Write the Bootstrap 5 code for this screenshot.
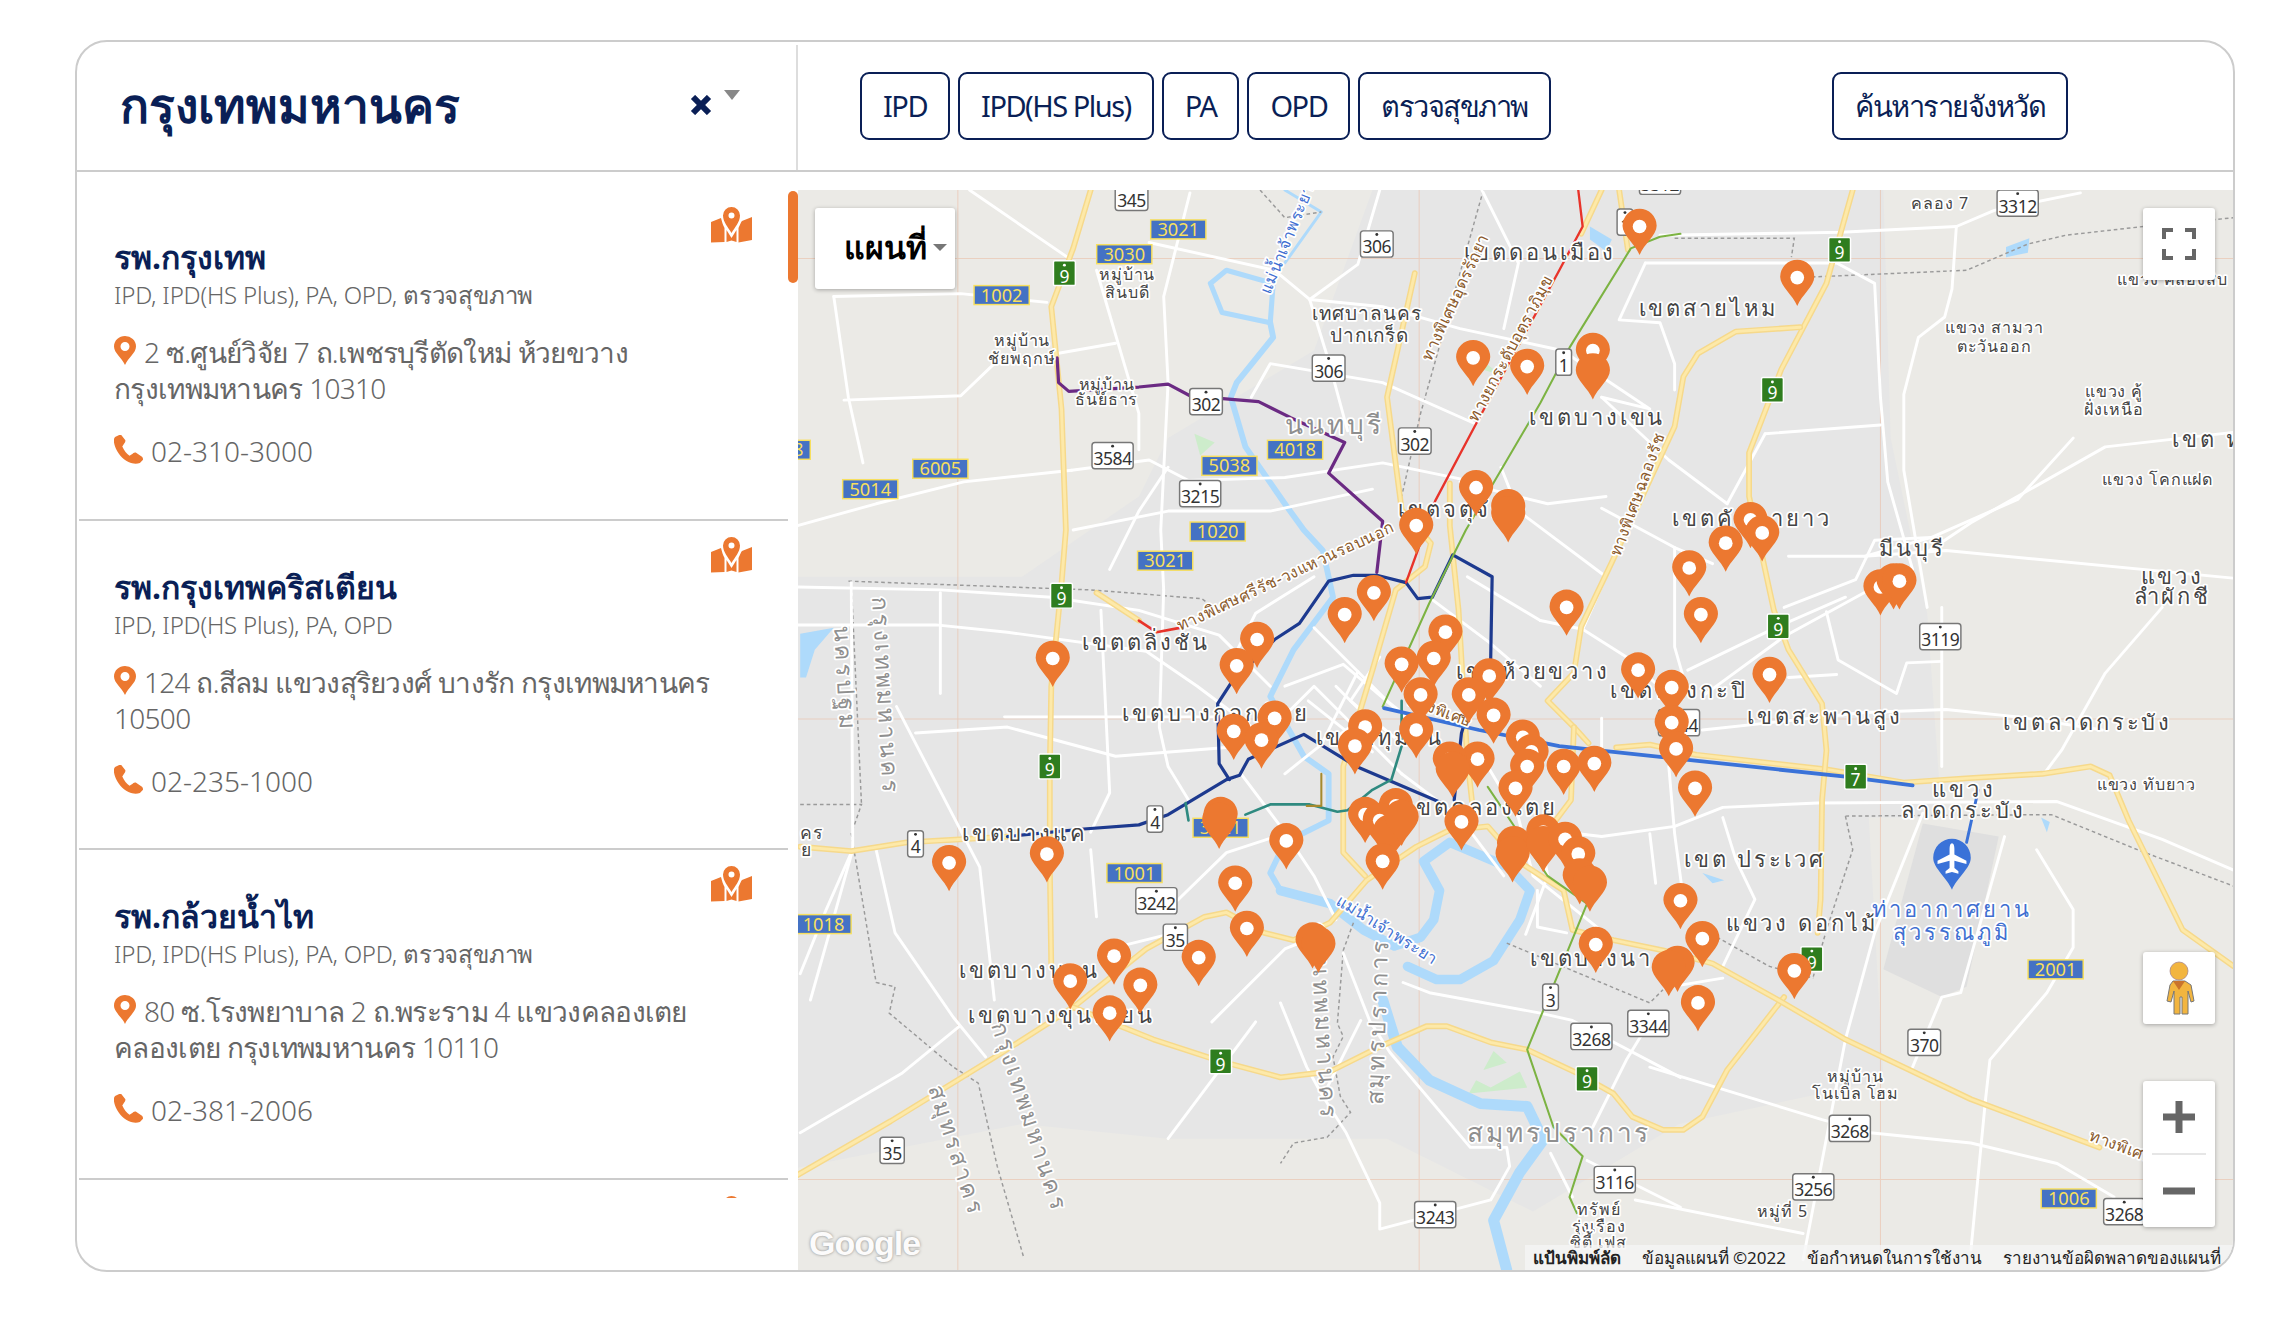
<!DOCTYPE html>
<html lang="th">
<head>
    <meta charset="UTF-8">
    <meta name="viewport" content="width=device-width, initial-scale=1.0">
    <title>โรงพยาบาล</title>
    <link href="https://cdn.jsdelivr.net/npm/bootstrap@5.3.0/dist/css/bootstrap.min.css" rel="stylesheet">
    <style>
        body { background: #fff; font-family: "Noto Sans", sans-serif; color: #666; }
        .hosp-card { width: 2160px; height: 1232px; margin: 40px 0 0 75px; border: 2px solid #ccc; border-radius: 32px; overflow: hidden; }
        .hosp-head { height: 130px; border-bottom: 2px solid #ccc; flex: none; }
        .prov-box { width: 721px; padding: 0 56px 6px 43px; border-right: 2px solid #ddd; margin-top: 3px; }
        .prov-title { font-size: 48px; font-weight: 700; color: #0a1f56; margin: 0; line-height: 1.2; }
        .prov-caret { width: 0; height: 0; border-left: 8px solid transparent; border-right: 8px solid transparent; border-top: 10px solid #888; margin: 0 0 20px 12px; }
        .filter-box { padding: 0 165px 0 62px; gap: 8px; }
        .btn-plan { height: 68px; padding: 0 21px 2px; font-size: 29px; letter-spacing: -1.5px; line-height: 1; color: #0a1f56; background: #fff; border: 2px solid #0a1f56; border-radius: 9px; white-space: nowrap; }
        .btn-plan:hover { color: #0a1f56; background: #fff; border-color: #0a1f56; }
        .hosp-list { width: 721px; height: 1007px; margin-top: 19px; flex: none; overflow: hidden; position: relative; }
        .hosp-item { height: 329.5px; margin: 0 10px 0 2px; padding: 0 36px 0 35px; border-bottom: 2px solid #ccc; }
        .hosp-text { width: 596px; flex: none; }
        .hosp-name { font-size: 32px; font-weight: 700; color: #0a1f56; line-height: 44px; margin: 44px 0 0; white-space: nowrap; }
        .hosp-plans { font-size: 24px; font-weight: 300; letter-spacing: -.2px; line-height: 32px; margin: 0; white-space: nowrap; }
        .hosp-addr { font-size: 28px; font-weight: 300; letter-spacing: -.7px; line-height: 36px; margin: 23px 0 0; }
        .hosp-tel { font-size: 28px; font-weight: 300; line-height: 36px; margin: 27px 0 0; }
        .ico-pin { width: 22px; height: 29px; vertical-align: -2px; margin-right: 8px; }
        .ico-tel { width: 29px; height: 29px; vertical-align: -2px; margin-right: 8px; }
        .ico-map { width: 41px; height: 36px; margin-top: 16px; flex: none; }
        .list-thumb { position: absolute; right: 0; top: 0; width: 10px; height: 92px; background: #ec7830; border-radius: 5px; }
        .map-pane { height: 1080px; margin-top: 18px; overflow: hidden; position: relative; background: #ebeae6; flex-grow: 1; }
        .map-pane svg.map-canvas { display: block; width: 100%; height: 100%; }
        .map-canvas text { font-family: "Noto Sans", sans-serif; text-anchor: middle; paint-order: stroke; stroke: #fff; stroke-width: 2.4px; stroke-linejoin: round; }
        .map-canvas text.shield-num { stroke: none; }
        .map-ctrl { position: absolute; background: #fff; border-radius: 3px; box-shadow: 0 1px 4px rgba(0,0,0,.3); }
        .ctrl-type { left: 17px; top: 18px; width: 140px; height: 81px; padding: 0 0 3px 20px; font-size: 32px; font-weight: 700; color: #000; gap: 6px; }
        .ctrl-caret { width: 0; height: 0; border-left: 7px solid transparent; border-right: 7px solid transparent; border-top: 7px solid #777; }
        .ctrl-full { right: 18px; top: 18px; width: 72px; height: 72px; }
        .ctrl-peg { right: 18px; top: 762px; width: 72px; height: 72px; }
        .ctrl-zoom { right: 18px; top: 891px; width: 72px; height: 146px; }
        .zoom-cell { flex: 1 1 0; }
        .zoom-line { width: 54px; height: 2px; background: #e6e6e6; margin: 0 auto; }
        .map-foot { position: absolute; right: 0; bottom: 0; height: 25px; padding: 0 12px 0 8px; gap: 21px; background: rgba(245,245,245,.75); font-size: 17px; line-height: 25px; color: #222; white-space: nowrap; }
        .map-logo { position: absolute; left: 11px; bottom: 10px; font-family: "Liberation Sans", sans-serif; font-size: 34px; font-weight: 700; color: #fff; opacity: .85; letter-spacing: -1px; text-shadow: 0 0 3px #777; line-height: 1; }
    </style>
</head>
<body>
    <div class="hosp-card d-flex flex-column">
        <div class="hosp-head d-flex">
            <div class="prov-box d-flex align-items-center">
                <h1 class="prov-title flex-grow-1">กรุงเทพมหานคร</h1>
                <svg width="22" height="20" viewBox="0 0 22 20"><path d="M3 2 19 18M19 2 3 18" stroke="#0a1f56" stroke-width="6" fill="none"/></svg>
                <span class="prov-caret"></span>
            </div>
            <div class="filter-box d-flex align-items-center flex-grow-1">
                <button class="btn btn-plan">IPD</button>
                <button class="btn btn-plan">IPD(HS Plus)</button>
                <button class="btn btn-plan">PA</button>
                <button class="btn btn-plan">OPD</button>
                <button class="btn btn-plan">ตรวจสุขภาพ</button>
                <button class="btn btn-plan ms-auto">ค้นหารายจังหวัด</button>
            </div>
        </div>
        <div class="d-flex flex-grow-1">
            <div class="hosp-list">
                <div class="hosp-item d-flex justify-content-between">
                    <div class="hosp-text">
                        <h2 class="hosp-name">รพ.กรุงเทพ</h2>
                        <p class="hosp-plans">IPD, IPD(HS Plus), PA, OPD, ตรวจสุขภาพ</p>
                        <p class="hosp-addr"><svg class="ico-pin"><use href="#sym-pin"/></svg>2 ซ.ศูนย์วิจัย 7 ถ.เพชรบุรีตัดใหม่ ห้วยขวาง กรุงเทพมหานคร 10310</p>
                        <p class="hosp-tel"><svg class="ico-tel"><use href="#sym-tel"/></svg>02-310-3000</p>
                    </div>
                    <svg class="ico-map"><use href="#sym-map"/></svg>
                </div>
                <div class="hosp-item d-flex justify-content-between">
                    <div class="hosp-text">
                        <h2 class="hosp-name">รพ.กรุงเทพคริสเตียน</h2>
                        <p class="hosp-plans">IPD, IPD(HS Plus), PA, OPD</p>
                        <p class="hosp-addr"><svg class="ico-pin"><use href="#sym-pin"/></svg>124 ถ.สีลม แขวงสุริยวงศ์ บางรัก กรุงเทพมหานคร 10500</p>
                        <p class="hosp-tel"><svg class="ico-tel"><use href="#sym-tel"/></svg>02-235-1000</p>
                    </div>
                    <svg class="ico-map"><use href="#sym-map"/></svg>
                </div>
                <div class="hosp-item d-flex justify-content-between">
                    <div class="hosp-text">
                        <h2 class="hosp-name">รพ.กล้วยน้ำไท</h2>
                        <p class="hosp-plans">IPD, IPD(HS Plus), PA, OPD, ตรวจสุขภาพ</p>
                        <p class="hosp-addr"><svg class="ico-pin"><use href="#sym-pin"/></svg>80 ซ.โรงพยาบาล 2 ถ.พระราม 4 แขวงคลองเตย คลองเตย กรุงเทพมหานคร 10110</p>
                        <p class="hosp-tel"><svg class="ico-tel"><use href="#sym-tel"/></svg>02-381-2006</p>
                    </div>
                    <svg class="ico-map"><use href="#sym-map"/></svg>
                </div>
                <div class="hosp-item d-flex justify-content-end">
                    <svg class="ico-map"><use href="#sym-map"/></svg>
                </div>
                <span class="list-thumb"></span>
            </div>
            <div class="map-pane">
                <svg class="map-canvas" viewBox="546.5 130 983 740" preserveAspectRatio="none">
                    <polygon fill="#e6e6e6" points="546,395 700,395 780,340 800,300 900,240 940,130 1290,130 1295,300 1320,420 1330,560 1280,560 1290,740 1150,770 1050,830 950,780 800,780 700,770 546,800"/>
                    <polygon fill="#dfdfdf" points="1317,564 1369,573 1347,676 1330,683 1290,664"/>
                    <g fill="#cdeccb">
                        <polygon points="1023,720 1032,728 1016,733"/>
                        <polygon points="1006,749 1011,740 1021,745 1041,734 1046,745"/>
                        <polygon points="818,297 832,303 822,312"/>
                        <polygon points="1013,245 1028,257 1012,252"/>
                    </g>
                    <g fill="#aedafb">
                        <polygon points="1374,169 1390,163 1389,173 1374,176"/>
                        <polygon points="1089,155 1104,164 1100,172 1089,164"/>
                        <polygon points="1166,598 1181,603 1173,605"/>
                        <polygon points="548,434 571,430 558,445 552,464 548,464"/>
                        <polygon points="1398,560 1404,563 1402,570"/>
                    </g>
                    <g fill="none" stroke="#e9b9a0" stroke-opacity=".55" stroke-width=".7">
                        <path d="M656 130V870M972 130V870M1288 130V870M546 177H1530M546 492.500H1530M546 808H1530"/>
                    </g>
                    <g id="riverLayer" fill="none" stroke="#aedafb" stroke-linejoin="round" stroke-linecap="round"></g>
                    <g id="dashLayer" fill="none" stroke="#9a9a9a" stroke-width="1" stroke-dasharray="2.500 2"></g>
                    <g id="roadLayer" fill="none" stroke="#fff" stroke-linejoin="round" stroke-linecap="round"></g>
                    <g id="highwayLayer" fill="none" stroke-linejoin="round" stroke-linecap="round"></g>
                    <g id="transitLayer" fill="none" stroke-linejoin="round" stroke-linecap="round"></g>
                    <g id="labelLayer"></g>
                    <g id="shieldLayer"></g>
                    <g id="markerLayer"></g>
                </svg>
                <div class="map-ctrl ctrl-type d-flex align-items-center justify-content-center">แผนที่<span class="ctrl-caret"></span></div>
                <div class="map-ctrl ctrl-full d-flex align-items-center justify-content-center">
                    <svg width="34" height="32" viewBox="0 0 34 32"><path d="M2 11V2H11M23 2H32V11M2 21V30H11M23 30H32V21" fill="none" stroke="#666" stroke-width="4"/></svg>
                </div>
                <div class="map-ctrl ctrl-peg d-flex align-items-center justify-content-center">
                    <svg width="32" height="54" viewBox="0 0 32 54"><path d="M10 20h12l6 4 3 16-3 1-3-11v23h-6V36h-2v17H11V30L8 41l-4-1 3-16z" fill="#f2b53f" stroke="#777" stroke-width="1"/><circle cx="16" cy="10" r="9" fill="#f2b53f" stroke="#a88" stroke-width=".8"/><path d="M10 20h12l-6 9z" fill="#c9742c"/></svg>
                </div>
                <div class="map-ctrl ctrl-zoom d-flex flex-column">
                    <div class="zoom-cell d-flex align-items-center justify-content-center"><svg width="34" height="34" viewBox="0 0 34 34"><path d="M17 1V33M1 17H33" stroke="#666" stroke-width="7"/></svg></div>
                    <div class="zoom-line"></div>
                    <div class="zoom-cell d-flex align-items-center justify-content-center"><svg width="34" height="8" viewBox="0 0 34 8"><path d="M1 4H33" stroke="#666" stroke-width="7"/></svg></div>
                </div>
                <div class="map-logo">Google</div>
                <div class="map-foot d-flex">
                    <span class="fw-bold">แป้นพิมพ์ลัด</span>
                    <span>ข้อมูลแผนที่ ©2022</span>
                    <span>ข้อกำหนดในการใช้งาน</span>
                    <span>รายงานข้อผิดพลาดของแผนที่</span>
                </div>
            </div>
        </div>
    </div>

    <svg width="0" height="0" class="position-absolute">
        <symbol id="sym-pin" viewBox="0 0 22 29"><path fill-rule="evenodd" fill="#ec7830" d="M11 29C8 22 0 17 0 10.500A11 10.500 0 0 1 22 10.500C22 17 14 22 11 29ZM11 6A4.500 4.500 0 1 0 11 15 4.500 4.500 0 0 0 11 6Z"/></symbol>
        <symbol id="sym-tel" viewBox="0 0 28 28"><path fill="#ec7830" d="M5 0 1 2C-1 4 0 8 1 11 3 17 8 23 14 26 18 28 22 28 25 27L28 24C28 23 28 22 27 21L21 17C20 17 19 17 18 18L15 20C12 18 10 15 8 11L10 8C11 7 11 6 11 5L7 0Z"/></symbol>
        <symbol id="sym-map" viewBox="0 0 41 36"><path fill="#ec7830" fill-rule="evenodd" d="M20.500 26C17 20 12 15 12 8.500A8.500 8.500 0 0 1 29 8.500C29 15 24 20 20.500 26ZM20.500 5.500A3 3 0 1 0 20.500 11.500 3 3 0 0 0 20.500 5.500Z"/><path fill="#ec7830" d="M0 15 10 11C11 15 12 18 13.500 21V35L0 35.500ZM15.500 23 20.500 31 25.500 23V35L20.500 33.500 15.500 35ZM27.500 21C29 18 30 15 31 14L41 10V33L27.500 35.500Z"/></symbol>
    </svg>

    <script src="https://cdn.jsdelivr.net/npm/bootstrap@5.3.0/dist/js/bootstrap.bundle.min.js"></script>
    <script>
        // all map data is in the coordinates of the svg viewBox
        const line = pts => 'M' + pts.map(p => p.join(' ')).join('L');

        const rivers = [
            [3.500, [[829,194],[837,214],[870,221],[872,194],[840,185],[829,194]]],
            [4, [[870,221],[872,231],[847,262],[843,272],[853,306],[880,345],[893,363],[906,377],[913,409],[886,445],[870,477],[893,518],[910,530],[910,562],[880,577],[870,598],[877,610]]],
            [6.500, [[877,610],[911,619],[934,637],[955,648],[973,642],[982,630],[986,610],[975,590],[993,577],[1033,594],[1048,610],[1041,630],[1023,658],[1000,671],[984,671],[964,662]]],
            [7.500, [[947,685],[957,717],[979,740],[1014,756],[1046,758],[1057,781],[1041,803],[1023,836],[1032,870]]],
            [2, [[880,130],[905,145],[880,180]]]
        ];

        const dashes = [
            [[927,632],[920,651],[916,701],[920,710],[913,724],[918,751],[925,762],[909,779],[886,783],[877,797]],
            [[1032,646],[1130,687],[1139,678]],
            [[1147,163],[1229,163],[1227,176]],
            [[1232,190],[1347,185],[1389,167],[1415,161],[1468,155],[1530,149]],
            [[581,398],[747,404],[823,410],[837,420]],
            [[548,551],[590,551],[583,571],[600,673],[613,676],[609,694],[653,731],[670,742],[683,799],[701,861]],
            [[1264,559],[1269,582],[1251,637],[1242,669]],
            [[1264,559],[1405,558],[1464,582],[1530,607]],
            [[1176,642],[1212,662],[1242,670]],
            [[863,130],[880,149],[905,145]],
            [[1016,130],[973,283],[960,340]],
            [[583,399],[590,551]]
        ];

        const roads = [
            [[546,402],[644,404],[720,409],[780,418],[835,435],[870,470]],
            [[546,428],[641,428],[690,433],[785,446],[820,470],[860,500]],
            [[583,399],[584,582],[568,639],[555,685]],
            [[614,484],[671,594],[681,685]],
            [[644,406],[644,475]],
            [[627,502],[690,498],[764,518],[840,512]],
            [[754,418],[760,543],[747,570]],
            [[688,491],[780,491],[834,491]],
            [[797,404],[794,498],[800,525],[814,548]],
            [[747,582],[751,628]],
            [[800,623],[840,584],[880,571]],
            [[548,667],[565,625],[583,584]],
            [[600,582],[613,639],[653,697],[675,724]],
            [[548,776],[618,735],[657,703]],
            [[664,130],[731,176]],
            [[787,166],[873,185],[897,205],[947,210],[1000,225],[1070,240]],
            [[571,203],[658,201],[717,207]],
            [[571,203],[581,272],[591,317]],
            [[578,274],[658,271],[681,249],[724,242],[764,235]],
            [[751,185],[780,283],[780,308]],
            [[815,132],[797,203],[800,262],[795,363],[797,404]],
            [[897,205],[910,247],[923,295]],
            [[897,205],[930,181],[945,130]],
            [[857,272],[870,249],[947,262],[1010,290]],
            [[734,322],[787,315],[814,329],[880,327],[947,317],[1010,330]],
            [[546,360],[600,345],[660,330],[734,322]],
            [[735,363],[800,350],[870,350],[940,335]],
            [[1137,161],[1261,159],[1340,155],[1366,144],[1425,132]],
            [[1127,180],[1258,180],[1284,194],[1288,272],[1293,330],[1310,390]],
            [[1340,155],[1337,198],[1332,217],[1314,231],[1304,270],[1304,322],[1320,416]],
            [[1530,296],[1442,306],[1350,358],[1320,378]],
            [[1225,381],[1277,381],[1333,377],[1530,396]],
            [[1277,381],[1323,368],[1382,342],[1420,300]],
            [[1330,416],[1330,525]],
            [[1166,500],[1277,488],[1333,486],[1382,491],[1440,500]],
            [[1481,416],[1442,461],[1412,514],[1400,530]],
            [[1055,568],[1097,573],[1147,566],[1180,553],[1245,550],[1409,549],[1481,575],[1530,596]],
            [[1317,557],[1284,639],[1264,712],[1235,863]],
            [[1395,582],[1420,623],[1420,649],[1402,680],[1363,726],[1360,753],[1350,856]],
            [[1373,573],[1343,680],[1330,683],[1310,731]],
            [[1130,731],[1248,767],[1281,776],[1350,783],[1409,797],[1448,820]],
            [[1120,822],[1235,845]],
            [[1127,180],[1109,219],[1137,221],[1147,249],[1147,267]],
            [[1097,272],[1143,315],[1183,345]],
            [[1209,297],[1288,291]],
            [[1183,345],[1209,297]],
            [[1097,348],[1147,375],[1173,386]],
            [[1147,375],[1147,443],[1153,464]],
            [[1222,416],[1271,397],[1284,370],[1323,368]],
            [[1156,459],[1218,429],[1264,409]],
            [[1166,477],[1222,436],[1284,402]],
            [[1251,419],[1259,452],[1299,475],[1306,454],[1330,453]],
            [[1225,464],[1258,462]],
            [[1097,492],[1097,525]],
            [[1055,425],[1084,431],[1114,450],[1134,468]],
            [[1130,571],[1134,605]],
            [[1143,525],[1147,571],[1153,616]],
            [[1180,560],[1189,589],[1202,616],[1180,662]],
            [[1150,675],[1180,670]],
            [[1015,130],[1040,180],[1030,225]],
            [[1070,240],[1130,280],[1097,272]],
            [[1028,320],[1040,350],[1100,395],[1084,431]],
            [[1000,330],[1060,345],[1100,340]],
            [[1005,395],[1055,425]],
            [[980,410],[1020,440],[1055,470]],
            [[900,430],[950,480],[1000,520]],
            [[880,470],[920,455],[985,510]],
            [[870,500],[900,470],[960,530]],
            [[896,480],[940,515]],
            [[930,460],[905,510],[880,530]],
            [[915,470],[935,490],[915,505]],
            [[945,450],[925,480],[955,505]],
            [[850,530],[880,570],[900,600],[915,630]],
            [[840,460],[860,420],[900,395]],
            [[760,390],[780,350],[800,320]],
            [[1010,510],[1040,560],[1050,600],[1100,640]],
            [[960,530],[1000,560],[1030,600]],
            [[1053,610],[1053,635],[1073,639]],
            [[920,653],[938,699],[952,721],[1007,786],[1032,786],[1034,799],[1021,822],[945,842],[945,824],[922,776],[906,751],[932,699]],
            [[961,673],[979,680],[1055,694],[1077,699],[1151,738]],
            [[1062,790],[1077,820]],
            [[1091,772],[1114,726],[1128,703]],
            [[1087,795],[1151,827]],
            [[877,687],[895,731],[906,751]],
            [[1055,570],[1060,600],[1045,640]],
            [[830,700],[880,650],[905,640]],
            [[760,650],[800,640]],
            [[800,780],[860,700]]
        ];

        const highways = [
            [[747,130],[735,170],[720,210],[727,280],[730,363],[727,400],[720,470],[719,525],[719,594],[720,662],[735,690]],
            [[546,805],[610,768],[680,725],[735,690],[785,650],[825,628],[840,625],[866,639],[886,644],[911,632],[936,603],[970,580],[992,569],[1019,566],[1040,590]],
            [[548,580],[583,583],[621,577],[657,575],[690,573]],
            [[1107,512],[1130,510],[1162,517],[1251,527],[1304,536],[1349,533],[1399,530],[1432,525],[1445,531],[1458,562],[1495,637],[1530,662]],
            [[1269,130],[1251,194],[1220,253],[1198,310],[1198,340],[1207,381],[1215,418],[1225,445],[1248,482],[1251,514],[1248,548],[1247,616],[1245,639]],
            [[1233,224],[1189,227],[1163,242],[1153,258],[1147,292],[1104,385],[1083,429],[1078,461],[1060,480],[1078,498],[1088,509]],
            [[1078,498],[1076,548],[1064,564],[1040,590]],
            [[735,690],[790,712],[836,727],[877,738],[911,734],[945,717],[977,703],[991,703],[1021,714],[1046,719],[1080,735],[1105,749],[1118,765],[1139,774],[1153,774],[1166,765],[1183,733],[1222,683]],
            [[1040,590],[1071,610],[1077,637],[1105,644],[1139,651],[1173,660],[1218,685],[1264,712],[1350,753],[1438,786]],
            [[969,187],[950,272],[960,349],[980,372],[976,388],[956,404],[940,459],[920,525],[920,584],[935,600]],
            [[993,331],[993,360],[999,418],[1005,520],[1010,565]],
            [[1097,130],[1083,160]],
            [[1109,130],[1115,171]],
            [[751,406],[780,425]]
        ];

        const transit = [
            ['#1d3a8f', 2.200, [[690,573],[740,568],[780,565],[800,558],[840,534],[849,531],[855,520],[893,503],[929,525],[990,551]]],
            ['#1d3a8f', 2.200, [[842,534],[835,523],[834,482],[843,468],[873,438],[890,427],[910,398],[927,394],[943,394],[963,399],[971,410],[981,409],[995,380],[1022,395],[1021,452],[1010,473],[1001,502],[996,548]]],
            ['#6b2a83', 2.200, [[724,245],[725,262],[732,268],[780,265],[800,263],[815,271],[862,275],[884,286],[921,303],[910,324],[947,357],[943,392]]],
            ['#e8332a', 1.600, [[1081,130],[1084,155],[1068,185],[1010,292],[983,343],[971,377],[963,399]]],
            ['#e8332a', 1.800, [[780,425],[792,433],[808,430]]],
            ['#7cb342', 1.400, [[1151,160],[1137,162],[1117,170],[1075,238],[1055,276],[1004,363],[979,413],[947,484]]],
            ['#7cb342', 1.400, [[1019,539],[1060,600],[1087,619],[1046,719],[1064,772],[1084,792],[1075,820],[1080,831]]],
            ['#2f8a80', 1.800, [[960,480],[960,511],[953,534],[940,541],[923,555],[916,556],[897,551],[870,551],[853,558]]],
            ['#2f8a80', 1.800, [[814,562],[812,550]]],
            ['#3a72d8', 2.600, [[948,485],[1013,500],[1068,511],[1264,532],[1310,538]]],
            ['#3a72d8', 2, [[1355,541],[1347,577]]],
            ['#a58a2e', 1.400, [[905,530],[905,552],[895,552]]]
        ];

        // text, x, y, size, rotation, colour
        const G = '#444', B = '#8a5a2b', W = '#3f6fd1', F = '#8f8f8f';
        const labels = [
            ['เขตดอนเมือง',1055,178,15],['เขตสายไหม',1170,216,15],['เทศบาลนคร',936,219,13],['ปากเกร็ด',938,234,13],
            ['หมู่บ้าน',772,192,11],['สินบดี',772,204,11],['หมู่บ้าน',700,237,11],['ชัยพฤกษ์',700,249,11],
            ['หมู่บ้าน',758,267,11],['ธันย์ธาร',758,277,11],['นนทบุรี',914,297,18,0,F],['เขตบางเขน',1094,291,15],
            ['เขตจตุจักร',1000,354,15],['เขตคันนายาว',1200,360,15],['มีนบุรี',1310,381,15],['แขวง',1488,400,15],['ลำผักชี',1488,414,15],
            ['เขต ห',1512,306,15],['แขวง สามวา',1366,228,11],['ตะวันออก',1366,241,11],['แขวง คู้',1448,272,11],['ฝั่งเหนือ',1448,284,11],
            ['แขวง โคกแฝด',1478,332,11],['แขวง คลองสิบ',1488,195,11],['คลอง 7',1329,143,11],['เขตตลิ่งชัน',785,445,15],
            ['เขตบางกอกน้อย',833,494,15],['เขตปทุมวัน',945,510,15],['เขตห้วยขวาง',1050,465,15],['เขตบางกะปิ',1150,478,15],
            ['เขตสะพานสูง',1250,496,15],['เขตลาดกระบัง',1430,500,15],['แขวง',1345,546,15],['ลาดกระบัง',1345,560,15],
            ['แขวง ทับยาว',1470,541,11],['เขต ประเวศ',1202,594,15],['แขวง ดอกไม้',1234,638,15],['เขตบางนา',1090,662,15],
            ['เขตคลองเตย',1015,558,15],['เขตบางแค',702,576,15],['เขตบางบอน',705,670,15],['เขตบางขุนเทียน',727,701,15],
            ['หมู่บ้าน',1271,741,11],['โนเบิล โฮม',1271,753,11],['หมู่ที่ 5',1221,834,11],['สมุทรปราการ',1068,782,18,0,F],
            ['ทรัพย์',1095,832,11],['รุ่งเรือง',1095,844,11],['ซิตี้ เฟส',1095,855,11],['ท่าอากาศยาน',1337,628,15,0,W],['สุวรรณภูมิ',1337,644,15,0,W],
            ['กรุงเทพมหานคร',601,477,16,87,F],['นครปฐม',573,465,16,87,F],['กรุงเทพมหานคร',901,700,16,87,F],['สมุทรปราการ',949,700,16,-88,F],
            ['กรุงเทพมหานคร',700,767,16,72,F],['สมุทรสาคร',650,790,16,72,F],
            ['ทางพิเศษอุดรรัถยา',1000,205,11,-65,B],['ทางยกระดับอุตราภิมุข',1038,240,11,-62,B],['ทางพิเศษฉลองรัช',1125,340,11,-70,B],
            ['ทางพิเศษศรีรัช-วงแหวนรอบนอก',882,398,11,-25,B],['แม่น้ำเจ้าพระยา',885,165,11,-68,W],['แม่น้ำเจ้าพระยา',948,640,11,32,W],
            ['ทางพิเศษ',985,490,11,20,B],['ทางพิเศษ',1452,789,11,20,B],['คร',556,575,12],['ย',552,586,12]
        ];

        // white shields, blue shields, green shields
        const whiteShields = [['345',775,135],['306',943,167],['306',910,252],['302',826,275],['302',969,302],['3584',762,312],['3215',822,338],['1',1071,248],['3312',1382,139],['3312',1137,124],['3119',1329,436],['3344',1150,495],['4',627,578],['4',791,561],['3242',792,617],['35',805,642],['3',1062,683],['3268',1090,710],['3344',1129,701],['370',1318,714],['3268',1267,773],['3116',1106,808],['3256',1242,813],['3243',983,832],['35',611,788],['3268',1455,830],['1',1113,152]];
        const blueShields = [['3021',807,157],['3030',770,174],['1002',686,202],['5014',596,335],['6005',644,321],['4018',887,308],['5038',842,319],['1020',834,364],['3021',798,384],['1001',777,598],['3021',836,567],['1018',564,633],['2001',1408,664],['1006',1417,821],['5038',536,308]];
        const greenShields = [['9',729,187],['9',1260,171],['9',1214,267],['9',727,408],['9',719,525],['9',1218,429],['7',1271,532],['9',1241,657],['9',836,727],['9',1087,739]];

        // head centre of every marker; third value 0 means no hole shows
        const pins = [[1123,155],[1231,190],[1009,245],[1046,251],[1091,240],[1091,254,0],[1011,334],[1033,347],[1033,352,0],[970,360],[1073,416],[1157,389],[1182,372],[1199,356],[1207,365],[1165,421],[1288,402],[1297,398],[1301,398],[1212,462],[1122,459],[1145,471],[1145,495],[1148,513],[1161,540],[941,406],[921,421],[861,438],[847,456],[721,451],[960,455],[990,433],[982,451],[1020,463],[1006,476],[973,476],[1023,490],[970,500],[935,498],[928,511],[873,492],[845,501],[864,507],[1012,520],[993,520],[995,527,0],[1043,505],[1049,515],[1046,525],[1038,540],[1071,525],[1092,523],[836,558],[835,562,0],[881,576],[1001,563],[935,558],[956,552],[945,562],[952,570,0],[960,560,0],[947,590],[1037,578],[1036,585,0],[1057,570],[1057,578,0],[1072,575],[1081,585],[1082,600,0],[1089,605,0],[650,591],[717,585],[846,605],[854,636],[899,644,0],[903,647,0],[821,656],[763,655],[781,675],[733,672],[760,694],[1151,617],[1166,643],[1093,647],[1149,660],[1143,663,0],[1229,665],[1163,687]];

        const pinPath = 'M0 19.500C-3 12-11.700 6-11.700-.5A11.700 11.700 0 1 1 11.700-.5C11.700 6 3 12 0 19.500Z';

        function svgText(t, x, y, size, rot, fill) {
            const tr = rot ? ` transform="rotate(${rot} ${x} ${y})"` : '';
            const gap = size >= 15 ? 2 : (fill ? .3 : .6);
            return `<text x="${x}" y="${y}" font-size="${size}" letter-spacing="${gap}" fill="${fill || G}"${tr}>${t}</text>`;
        }

        document.getElementById('riverLayer').innerHTML = rivers.map(r => `<path d="${line(r[1])}" stroke-width="${r[0]}"/>`).join('');
        document.getElementById('dashLayer').innerHTML = dashes.map(r => `<path d="${line(r)}"/>`).join('');
        document.getElementById('roadLayer').innerHTML = roads.map(r => `<path d="${line(r)}" stroke-width="2"/>`).join('');
        document.getElementById('highwayLayer').innerHTML = highways.map(r => `<path d="${line(r)}" stroke="#f6d98b" stroke-width="4"/><path d="${line(r)}" stroke="#fde9a9" stroke-width="2"/>`).join('');
        document.getElementById('transitLayer').innerHTML = transit.map(r => `<path d="${line(r[2])}" stroke="${r[0]}" stroke-width="${r[1]}"/>`).join('');
        document.getElementById('labelLayer').innerHTML = labels.map(l => svgText(l[0], l[1], l[2], l[3], l[4], l[5])).join('');

        let shields = '';
        whiteShields.forEach(([t, x, y]) => {
            const w = 5 + t.length * 5.800;
            shields += `<rect x="${x - w / 2}" y="${y - 9}" width="${w}" height="18" rx="2" fill="#fff" stroke="#777" stroke-width="1"/><circle cx="${x}" cy="${y - 6.500}" r="1" fill="#333"/><text class="shield-num" x="${x}" y="${y + 6.500}" font-size="12" letter-spacing="-.3" fill="#333">${t}</text>`;
        });
        blueShields.forEach(([t, x, y]) => {
            const w = 9 + t.length * 7.200;
            shields += `<rect x="${x - w / 2}" y="${y - 6.500}" width="${w}" height="13" fill="#4472c4" stroke="#f7df5e" stroke-width="1"/><text class="shield-num" x="${x}" y="${y + 4.500}" font-size="12.500" fill="#f7df5e">${t}</text>`;
        });
        greenShields.forEach(([t, x, y]) => {
            shields += `<rect x="${x - 7.500}" y="${y - 8.500}" width="15" height="17" rx="1" fill="#2f7d1e" stroke="#fff" stroke-width="1"/><circle cx="${x}" cy="${y - 5.500}" r="1" fill="#fff"/><text class="shield-num" x="${x}" y="${y + 6.500}" font-size="12" fill="#fff">${t}</text>`;
        });
        document.getElementById('shieldLayer').innerHTML = shields;

        let markers = '';
        pins.forEach(([x, y, hole]) => {
            markers += `<g transform="translate(${x} ${y})"><path d="${pinPath}" fill="#ec7830"/>${hole === 0 ? '' : '<circle r="4.700" fill="#fff"/>'}</g>`;
        });
        // airport marker
        markers += `<g transform="translate(1337 588) scale(1.100)"><path d="${pinPath}" fill="#3a72d8"/><path d="M0-9.500C1-9.500 1.500-8 1.500-6V-2.500L9 1.500V3.500L1.500 1.500V6L4 8V9.500L0 8.500-4 9.500V8L-1.500 6V1.500L-9 3.500V1.500L-1.500-2.500V-6C-1.500-8-1-9.500 0-9.500Z" fill="#fff"/></g>`;
        document.getElementById('markerLayer').innerHTML = markers;
    </script>
</body>
</html>
